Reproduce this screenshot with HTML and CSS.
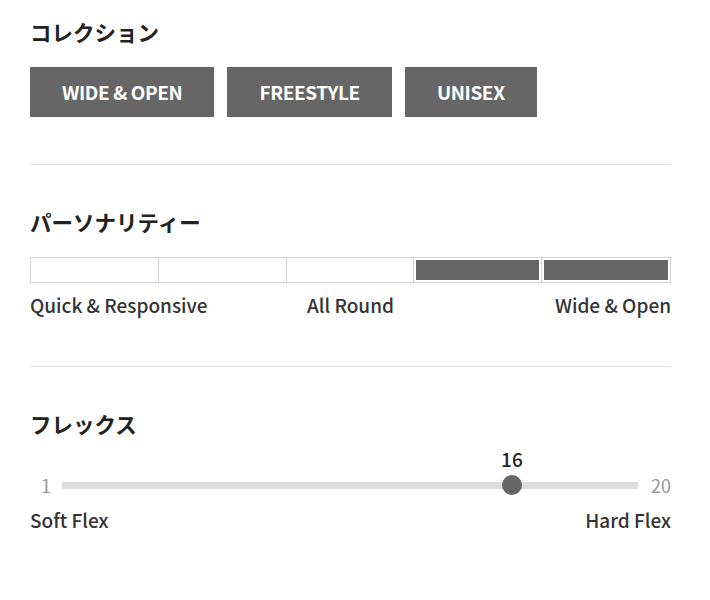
FILE: index.html
```html
<!DOCTYPE html>
<html lang="ja">
<head>
    <meta charset="UTF-8">
    <meta name="viewport" content="width=device-width, initial-scale=1.0">
    <title>Board Spec</title>
    <link rel="stylesheet" href="styles.css">
</head>
<body>
    <div class="spec">
        <!-- Collection -->
        <section class="spec-section">
            <h2 class="spec-title">コレクション</h2>
            <div class="tags">
                <span class="tag">WIDE &amp; OPEN</span>
                <span class="tag">FREESTYLE</span>
                <span class="tag">UNISEX</span>
            </div>
        </section>

        <!-- Personality -->
        <section class="spec-section">
            <h2 class="spec-title">パーソナリティー</h2>
            <div class="scale">
                <div class="scale-cell"></div>
                <div class="scale-cell"></div>
                <div class="scale-cell"></div>
                <div class="scale-cell filled"></div>
                <div class="scale-cell filled"></div>
            </div>
            <div class="scale-labels three">
                <span>Quick &amp; Responsive</span>
                <span class="mid">All Round</span>
                <span class="end">Wide &amp; Open</span>
            </div>
        </section>

        <!-- Flex -->
        <section class="spec-section last">
            <h2 class="spec-title">フレックス</h2>
            <div class="slider">
                <span class="slider-min">1</span>
                <div class="slider-track">
                    <div class="slider-knob" style="left: calc((100% - 20px) * 0.7895 + 10px);">
                        <span class="slider-value">16</span>
                    </div>
                </div>
                <span class="slider-max">20</span>
            </div>
            <div class="scale-labels flex-labels">
                <span>Soft Flex</span>
                <span>Hard Flex</span>
            </div>
        </section>
    </div>
</body>
</html>
```

FILE: styles.css
```css
body {
    margin: 0;
    padding: 0;
    background: #fff;
    font-family: "Noto Sans CJK JP", "Noto Sans", sans-serif;
    color: #222;
}

.spec {
    width: 641px;
    margin: 0 30px;
    padding-top: 17px;
}

.spec-section {
    padding: 0 0 47px;
    border-bottom: 1px solid #e2e2e2;
    margin-bottom: 42px;
}

.spec-section + .spec-section {
    padding-bottom: 49px;
}

.spec-section.last {
    border-bottom: none;
}

.spec-title {
    margin: 0;
    font-size: 21.5px;
    line-height: 30px;
    font-weight: 700;
    color: #222;
}

.tags {
    display: flex;
    gap: 13px;
    margin-top: 20px;
}

.tag {
    display: inline-block;
    background: #666;
    color: #fff;
    font-size: 19px;
    font-weight: 700;
    line-height: 50px;
    height: 50px;
    padding: 0 32px;
    letter-spacing: -0.4px;
}

.scale {
    display: grid;
    grid-template-columns: repeat(5, 1fr);
    margin-top: 20px;
    height: 24px;
    border: 1px solid #d4d4d4;
}

.scale-cell {
    border-right: 1px solid #d4d4d4;
}

.scale-cell:last-child {
    border-right: none;
}

.scale-cell.filled {
    background: #666;
    background-clip: content-box;
    padding: 2px;
}

.scale-labels {
    display: flex;
    justify-content: space-between;
    margin-top: 10px;
    font-size: 19px;
    line-height: 24px;
    font-weight: 500;
    color: #333;
}

.scale-labels.three {
    display: grid;
    grid-template-columns: 1fr auto 1fr;
}

.scale-labels .end {
    text-align: right;
}

.slider {
    display: flex;
    align-items: center;
    margin-top: 36px;
    height: 20px;
}

.slider-min,
.slider-max {
    font-size: 18px;
    color: #999;
    line-height: 20px;
}

.slider-min {
    width: 32px;
    text-align: center;
}

.slider-max {
    width: 33px;
    text-align: right;
}

.slider-track {
    flex: 1;
    height: 7px;
    background: #ddd;
    position: relative;
}

.slider-knob {
    position: absolute;
    top: 50%;
    width: 20px;
    height: 20px;
    margin: -10px 0 0 -9px;
    border-radius: 50%;
    background: #666;
}

.slider-value {
    position: absolute;
    bottom: 24px;
    left: 50%;
    transform: translateX(-50%);
    font-size: 19px;
    line-height: 24px;
    font-weight: 500;
    color: #222;
}

.flex-labels {
    margin-top: 13px;
}
```
